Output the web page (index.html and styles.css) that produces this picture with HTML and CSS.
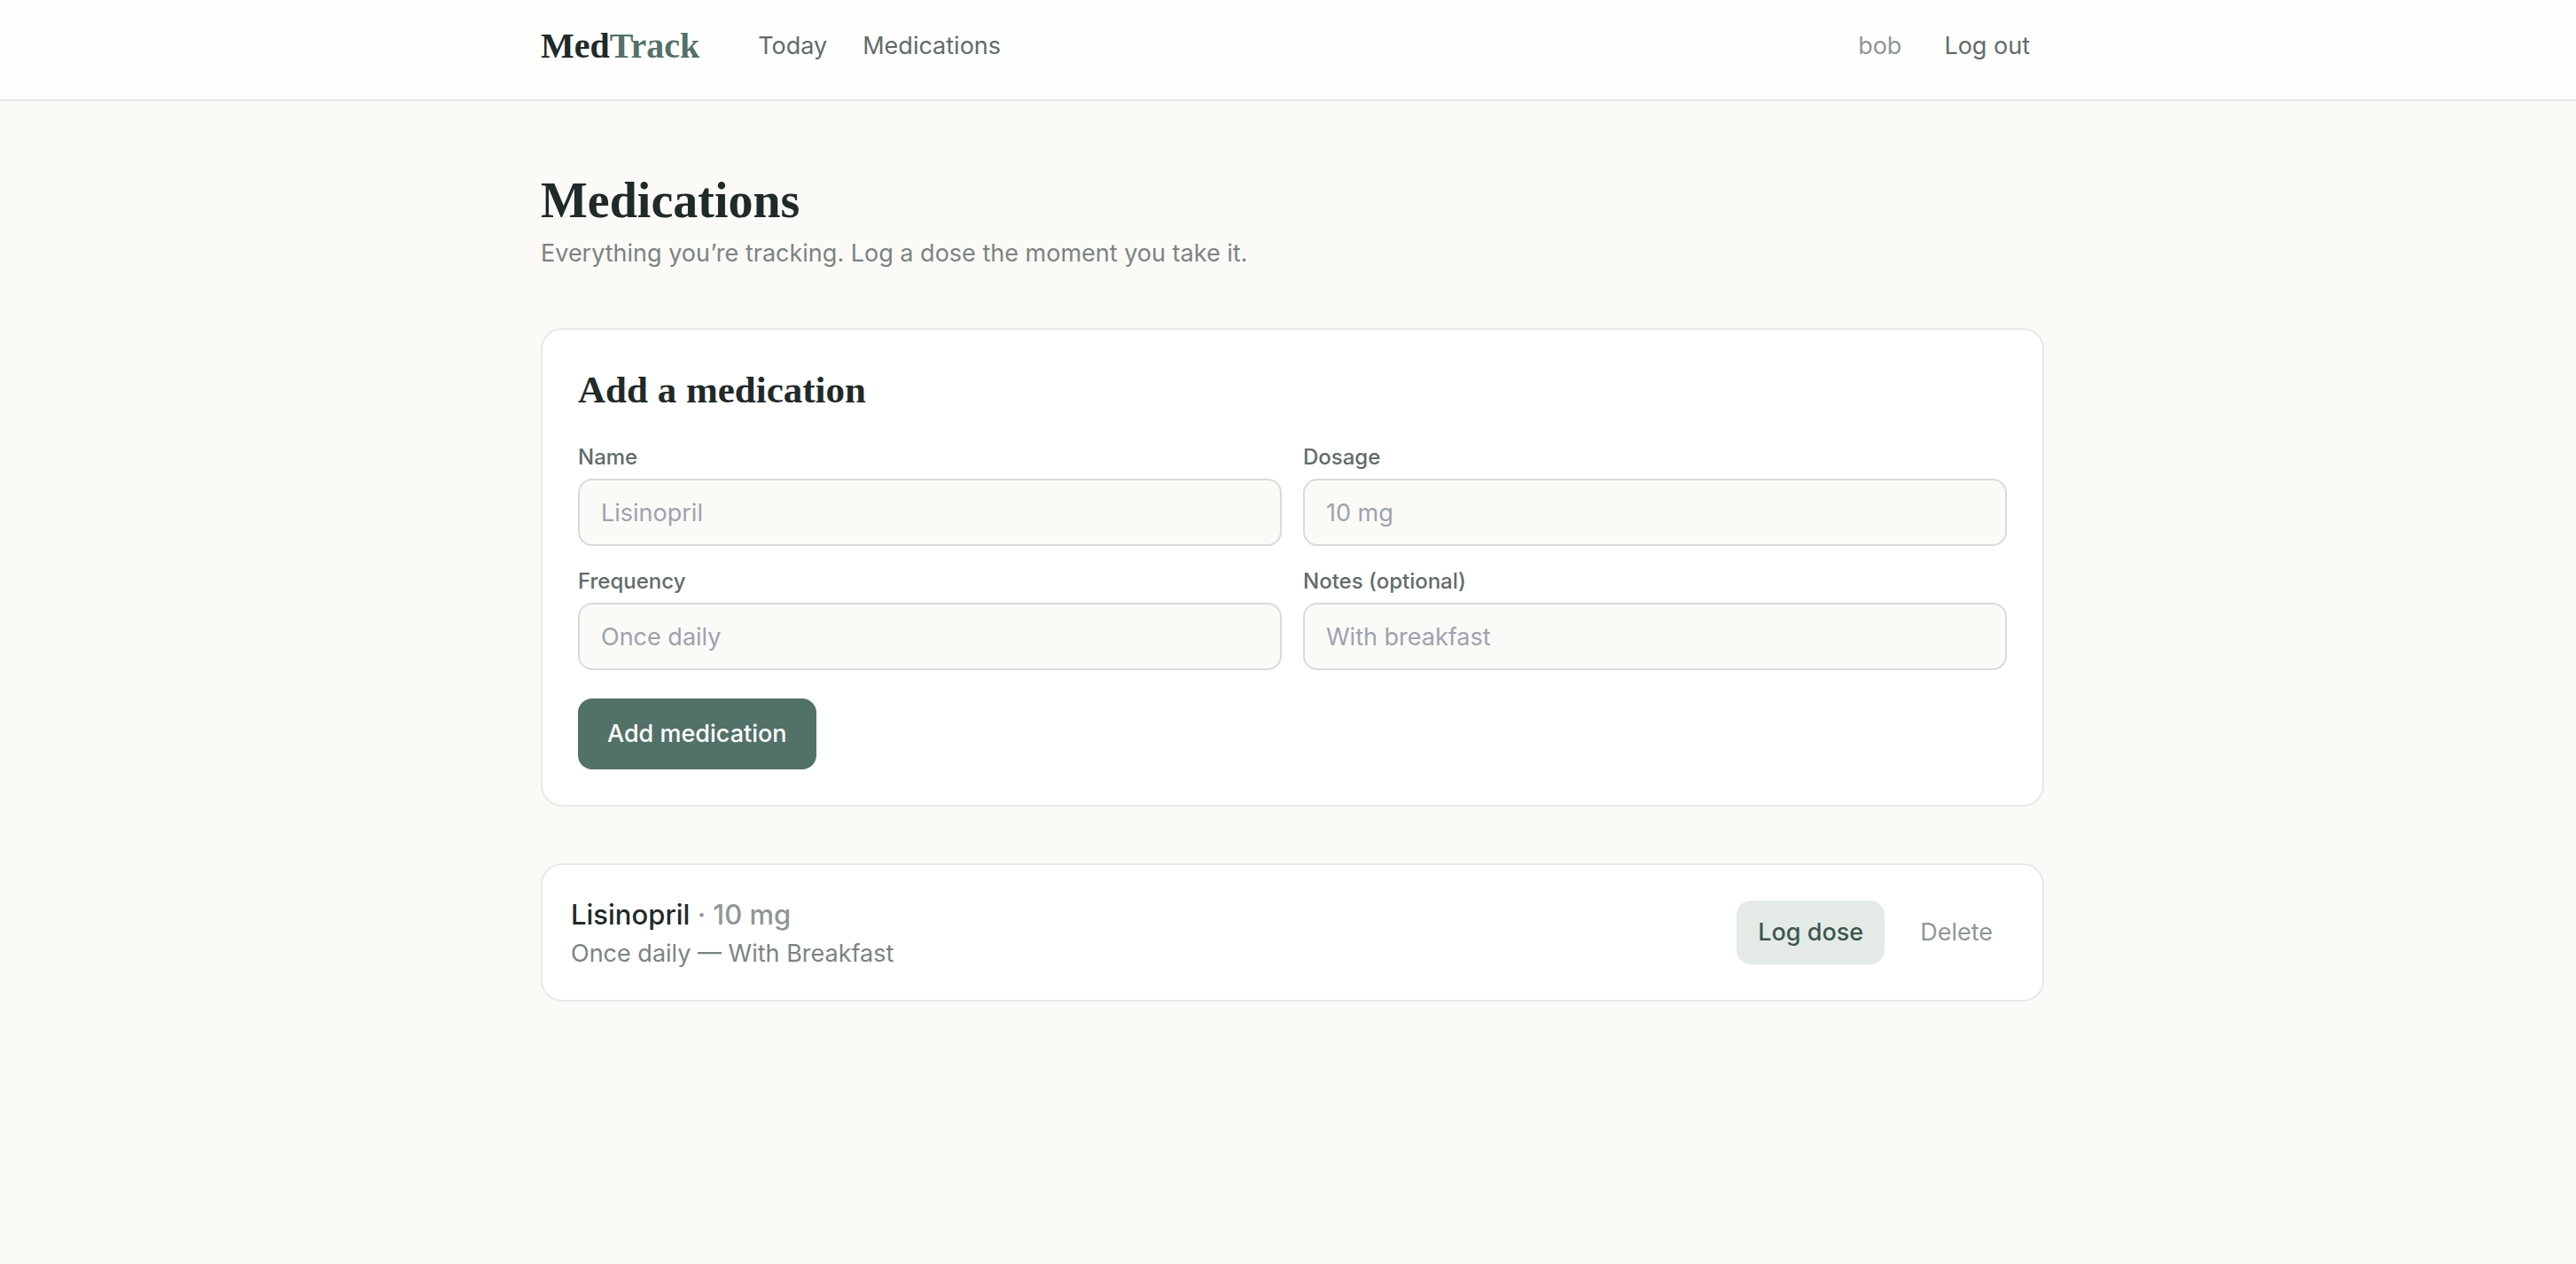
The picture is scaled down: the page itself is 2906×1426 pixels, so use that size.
FILE: index.html
```html
<!DOCTYPE html>
<html lang="en">
<head>
  <meta charset="utf-8">
  <meta name="viewport" content="width=device-width, initial-scale=1">
  <title>Medications · MedTrack</title>
  <link rel="stylesheet" href="styles.css">
</head>
<body>
  <header class="site-header">
    <div class="container header-row">
      <a class="brand" href="#">Med<span class="brand-accent">Track</span></a>
      <nav class="nav">
        <a class="nav-link" href="#">Today</a>
        <a class="nav-link" href="#">Medications</a>
      </nav>
      <div class="account">
        <span class="user">bob</span>
        <button class="logout" type="button">Log out</button>
      </div>
    </div>
  </header>

  <main class="container main">
    <div class="intro">
      <h1 class="page-title">Medications</h1>
      <p class="subtitle">Everything you’re tracking. Log a dose the moment you take it.</p>
    </div>

    <section class="card form-card">
      <h2 class="card-title">Add a medication</h2>
      <form class="form">
        <div class="fields">
          <div class="field">
            <label class="label" for="name">Name</label>
            <input class="input" id="name" type="text" placeholder="Lisinopril">
          </div>
          <div class="field">
            <label class="label" for="dosage">Dosage</label>
            <input class="input" id="dosage" type="text" placeholder="10 mg">
          </div>
          <div class="field">
            <label class="label" for="frequency">Frequency</label>
            <input class="input" id="frequency" type="text" placeholder="Once daily">
          </div>
          <div class="field">
            <label class="label" for="notes">Notes (optional)</label>
            <input class="input" id="notes" type="text" placeholder="With breakfast">
          </div>
        </div>
        <button class="btn btn-primary" type="submit">Add medication</button>
      </form>
    </section>

    <ul class="med-list">
      <li class="card med">
        <div class="med-info">
          <p class="med-name">Lisinopril <span class="med-dose">· 10 mg</span></p>
          <p class="med-detail">Once daily — With Breakfast</p>
        </div>
        <div class="med-actions">
          <button class="btn btn-soft" type="button">Log dose</button>
          <button class="btn btn-ghost" type="button">Delete</button>
        </div>
      </li>
    </ul>
  </main>
</body>
</html>
```
FILE: styles.css
```css
:root {
  --ink: #1f2a2a;
  --ink-2: #616c6a;
  --ink-3: #7a8482;
  --ink-4: #8f9796;
  --sage: #527168;
  --sage-dark: #3d574e;
  --sage-soft: #e4ebe6;
  --paper: #fbfaf6;
  --line: #e8e9e9;
  --line-strong: #d9dad9;
  --serif: "Liberation Serif", serif;
  --sans: Inter, sans-serif;
}

*,
*::before,
*::after {
  box-sizing: border-box;
}

body {
  margin: 0;
  background: var(--paper);
  color: var(--ink);
  font: 400 27px/40px var(--sans);
}

h1, h2, p, ul {
  margin: 0;
  padding: 0;
}

a {
  color: inherit;
  text-decoration: none;
}

button,
input {
  font: inherit;
  color: inherit;
}

.container {
  width: 100%;
  max-width: 1792px;
  margin: 0 auto;
  padding: 0 43px 0 53px;
}

.site-header {
  background: #fefefd;
  border-bottom: 2px solid #e7e7e9;
}

.header-row {
  display: flex;
  align-items: center;
  padding-top: 24px;
  padding-bottom: 32px;
}

.brand {
  font: 700 40px/56px var(--serif);
}

.brand-accent {
  color: var(--sage);
}

.nav {
  display: flex;
  gap: 40px;
  margin-left: 66px;
}

.nav-link {
  color: var(--ink-2);
}

.account {
  display: flex;
  align-items: center;
  gap: 32px;
  margin-left: auto;
}

.user {
  color: var(--ink-4);
}

.logout {
  padding: 0 16px;
  border: 0;
  background: none;
  color: var(--ink-2);
}

.main {
  display: flex;
  flex-direction: column;
  gap: 64px;
  padding-top: 80px;
  padding-bottom: 80px;
}

.intro {
  display: flex;
  flex-direction: column;
  gap: 8px;
}

.page-title {
  font: 700 56px/64px var(--serif);
}

.subtitle {
  color: var(--ink-3);
}

.card {
  background: #fff;
  border: 2px solid var(--line);
  border-radius: 24px;
}

.form-card {
  padding: 40px;
}

.card-title {
  margin-bottom: 32px;
  font: 700 43px/56px var(--serif);
}

.form {
  display: flex;
  flex-direction: column;
  align-items: flex-start;
  gap: 32px;
}

.fields {
  display: grid;
  grid-template-columns: 1fr 1fr;
  gap: 24px;
  width: 100%;
}

.field {
  display: flex;
  flex-direction: column;
  gap: 8px;
}

.label {
  color: var(--ink-2);
  font-size: 24px;
  font-weight: 500;
  line-height: 32px;
}

.input {
  width: 100%;
  height: 76px;
  padding: 0 24px;
  background: var(--paper);
  border: 2px solid var(--line-strong);
  border-radius: 16px;
}

.input::placeholder {
  color: #9ca3af;
  opacity: 1;
}

.btn {
  padding: 16px 24px;
  border: 0;
  border-radius: 16px;
}

.btn-primary {
  padding: 20px 33px;
  background: var(--sage);
  color: #fff;
  font-weight: 500;
}

.btn-soft {
  background: var(--sage-soft);
  color: var(--sage-dark);
  font-weight: 500;
}

.btn-ghost {
  background: none;
  color: var(--ink-4);
}

.med-list {
  list-style: none;
}

.med {
  display: flex;
  align-items: center;
  justify-content: space-between;
  padding: 32px;
}

.med-name {
  font-size: 31px;
  font-weight: 500;
  line-height: 48px;
}

.med-dose {
  color: var(--ink-4);
}

.med-detail {
  color: var(--ink-3);
}

.med-actions {
  display: flex;
  gap: 16px;
}
```
